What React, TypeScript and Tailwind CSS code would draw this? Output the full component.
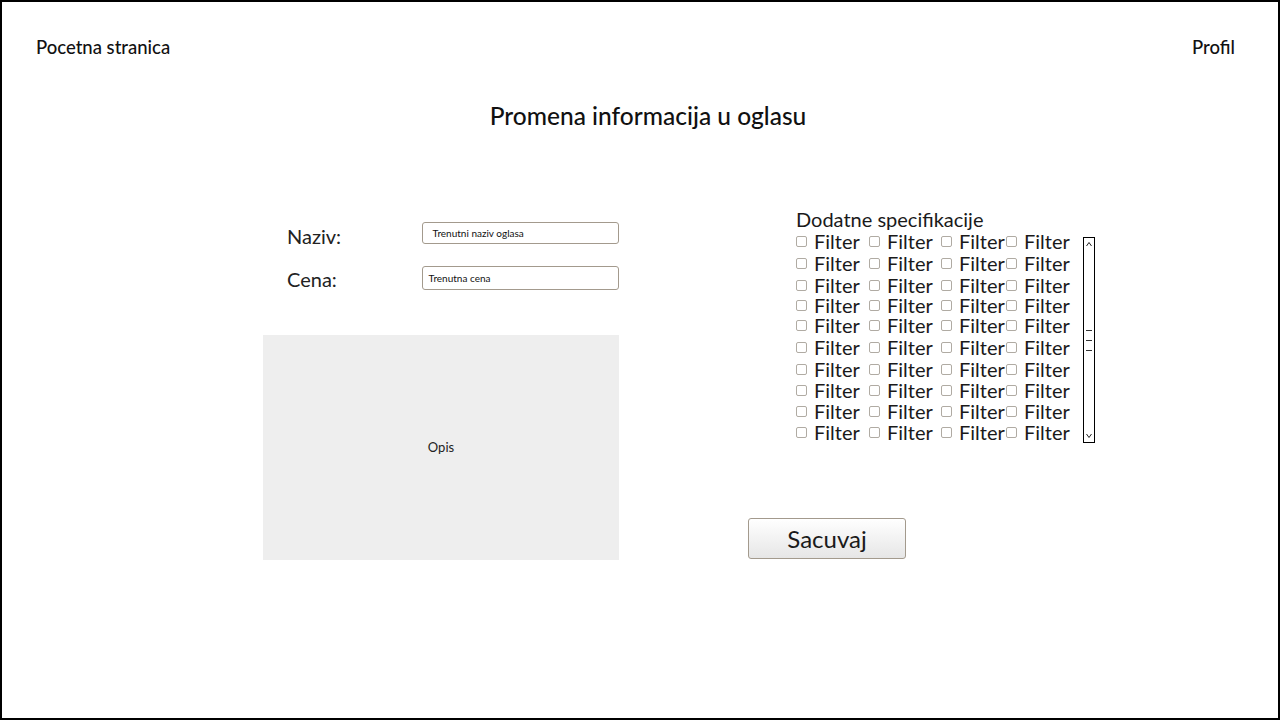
import React from "react";

const rowHeights = ["h-[22px]", "h-[22px]", "h-[22px]", "h-[19px]", "h-[21px]", "h-[22px]", "h-[22px]", "h-[21px]", "h-[20px]", "h-[22px]"];
const colWidths = ["w-[73px]", "w-[72px]", "w-[65px]", "w-[64px]"];

const FilterCell = ({ width }: { width: string }) => (
  <div className={`flex items-center gap-[7px] ${width}`}>
    <span className="w-[11px] h-[11px] border border-[#b0aba3] rounded-[2px] bg-white shrink-0" />
    <span className="text-[20px] leading-[19px] text-[#1a1a1a] whitespace-nowrap">Filter</span>
  </div>
);

const ScrollBar = () => (
  <div className="mt-[7px] ml-[13px] w-[12px] h-[206px] border border-black flex flex-col items-center justify-between py-[3px] bg-white">
    <svg width="8" height="6" viewBox="0 0 8 6">
      <path d="M1.5 5 L4 1.5 L6.5 5" fill="none" stroke="#222" strokeWidth="1" />
    </svg>
    <div className="flex flex-col gap-[9px] w-[6px]">
      <span className="h-px bg-[#333]" />
      <span className="h-px bg-[#333]" />
      <span className="h-px bg-[#333]" />
    </div>
    <svg width="8" height="6" viewBox="0 0 8 6">
      <path d="M1.5 1 L4 4.5 L6.5 1" fill="none" stroke="#222" strokeWidth="1" />
    </svg>
  </div>
);

export default function App() {
  return (
    <div className="w-[1280px] h-[720px] border-2 border-black bg-white font-['Lato','Noto_Sans',sans-serif] text-[#111] overflow-hidden">
      <div className="flex justify-between pt-[34px] pl-[34px] pr-[43px]">
        <span className="text-[18.5px] leading-[22px] font-medium">Pocetna stranica</span>
        <span className="text-[18.5px] leading-[22px] font-medium">Profil</span>
      </div>

      <h1 className="mt-[43px] pl-[16px] text-center text-[24.5px] leading-[29px] font-medium">
        Promena informacija u oglasu
      </h1>

      <div className="flex mt-[79px] pl-[261px]">
        <div className="w-[356px] pt-[13px]">
          <div className="flex items-start">
            <span className="w-[159px] pl-[24px] mt-[2px] text-[20px] leading-[24px] text-[#222]">Naziv:</span>
            <div className="w-[198px] h-[22px] border border-[#a39a8d] rounded-[3px] pl-[10px] flex items-center text-[10px] text-[#111]">
              Trenutni naziv oglasa
            </div>
          </div>
          <div className="flex items-start mt-[18px]">
            <span className="w-[159px] pl-[24px] mt-[1px] text-[20px] leading-[24px] text-[#222]">Cena:</span>
            <div className="w-[198px] h-[24px] border border-[#a39a8d] rounded-[3px] pl-[6px] flex items-center text-[10px] text-[#111]">
              Trenutna cena
            </div>
          </div>
          <div className="mt-[44px] h-[225px] bg-[#eeeeee] flex items-center justify-center text-[13px] text-[#222]">
            Opis
          </div>
        </div>

        <div className="ml-[129px] -mt-[1px]">
          <div className="pl-[48px]">
            <div className="text-[20px] leading-[22px] text-[#1a1a1a]">Dodatne specifikacije</div>
            <div className="flex items-start">
              <div className="flex flex-col">
                {rowHeights.map((h, i) => (
                  <div key={i} className={`flex items-center ${h}`}>
                    {colWidths.map((w, j) => (
                      <FilterCell key={j} width={w} />
                    ))}
                  </div>
                ))}
              </div>
              <ScrollBar />
            </div>
          </div>
          <button className="mt-[75px] w-[158px] h-[41px] border border-[#a39a8d] rounded-[3px] bg-gradient-to-b from-white to-[#e6e6e6] text-[24px] text-[#1a1a1a] flex items-center justify-center">
            Sacuvaj
          </button>
        </div>
      </div>
    </div>
  );
}
